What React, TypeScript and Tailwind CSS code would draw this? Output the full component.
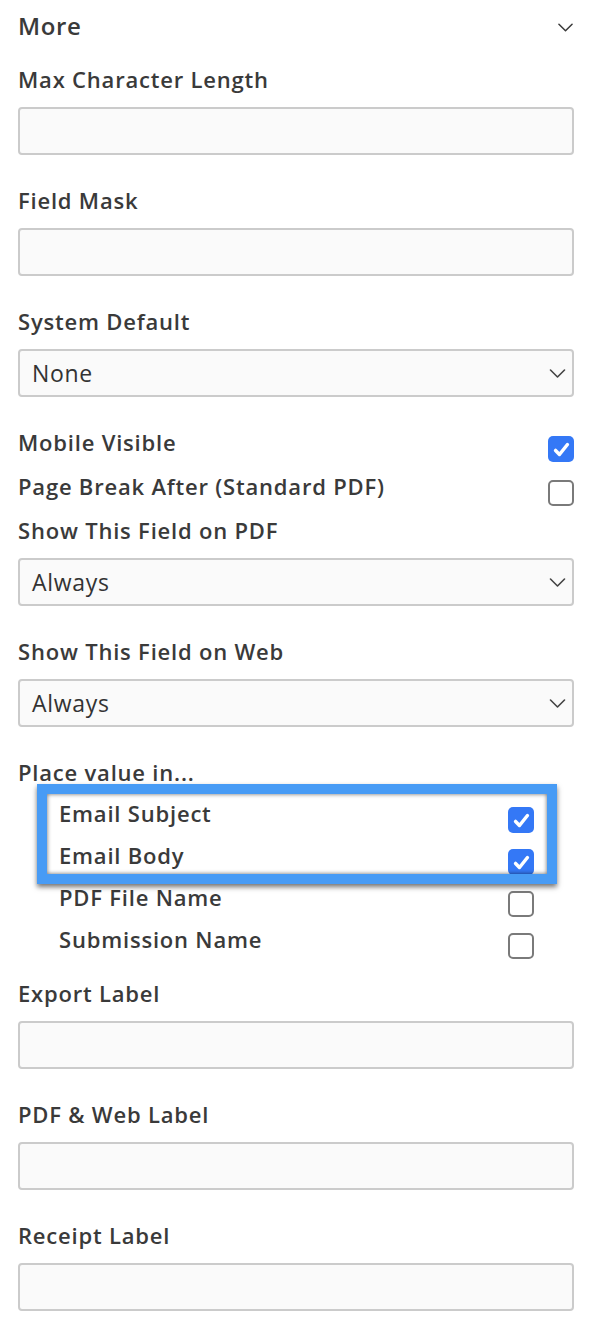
import React from "react";

const font = { fontFamily: "'Open Sans', Lato, Arial, sans-serif" };

function Chevron({ className }: { className?: string }) {
  return (
    <svg viewBox="0 0 16 9" className={className} fill="none">
      <path d="M1 1l7 7 7-7" stroke="currentColor" strokeWidth="1.6" strokeLinecap="round" strokeLinejoin="round" />
    </svg>
  );
}

function Checkbox({ checked }: { checked?: boolean }) {
  if (checked) {
    return (
      <span className="flex h-[26px] w-[26px] shrink-0 items-center justify-center rounded-[5px] bg-[#3478f6]">
        <svg viewBox="0 0 16 16" className="h-[19px] w-[19px]" fill="none">
          <path d="M3 8.8l3.3 3.4L13 3.8" stroke="#fff" strokeWidth="2.9" strokeLinecap="round" strokeLinejoin="round" />
        </svg>
      </span>
    );
  }
  return <span className="block h-[26px] w-[26px] shrink-0 rounded-[5px] border-2 border-[#7a7a7a] bg-white" />;
}

function Label({ children }: { children: React.ReactNode }) {
  return (
    <div className="h-[28px] text-[22px] font-[650] leading-[26px] tracking-[0.8px] text-[#3a3a3a]">
      {children}
    </div>
  );
}

function TextField({ label }: { label: string }) {
  return (
    <div className="mt-[32px]">
      <Label>{label}</Label>
      <div className="mt-[13px] h-[48px] rounded-[4px] border-2 border-[#cbcbcb] bg-[#fafafa]" />
    </div>
  );
}

function SelectField({ label, value }: { label: string; value: string }) {
  return (
    <div className="mt-[32px]">
      <Label>{label}</Label>
      <div className="mt-[13px] flex h-[48px] items-center justify-between rounded-[4px] border-2 border-[#cbcbcb] bg-[#fafafa] pl-[12px] pr-[6px]">
        <span className="text-[23px] tracking-[0.7px] text-[#333]">{value}</span>
        <Chevron className="h-[9px] w-[17px] text-[#444]" />
      </div>
    </div>
  );
}

function CheckRow({ label, checked, height }: { label: string; checked?: boolean; height: string }) {
  return (
    <div className={`flex items-start justify-between ${height}`}>
      <Label>{label}</Label>
      <div className="mt-[7px]">
        <Checkbox checked={checked} />
      </div>
    </div>
  );
}

export default function App() {
  const places = [
    { label: "Email Subject", checked: true },
    { label: "Email Body", checked: true },
    { label: "PDF File Name", checked: false },
    { label: "Submission Name", checked: false },
  ];

  return (
    <div className="min-h-screen bg-white pl-[18px] pr-[22px]" style={font}>
      <div className="flex h-[54px] items-center justify-between">
        <span className="-mt-[2px] text-[24px] font-[650] tracking-[0.6px] text-[#3a3a3a]">More</span>
        <Chevron className="mr-[1px] h-[9px] w-[15px] text-[#3a3a3a]" />
      </div>

      <div className="-mt-[20px]">
        <TextField label="Max Character Length" />
      </div>
      <TextField label="Field Mask" />
      <SelectField label="System Default" value="None" />

      <div className="mt-[32px]">
        <CheckRow label="Mobile Visible" checked height="h-[44px]" />
        <CheckRow label="Page Break After (Standard PDF)" height="h-[44px]" />
      </div>

      <div className="-mt-[32px]">
        <SelectField label="Show This Field on PDF" value="Always" />
      </div>
      <SelectField label="Show This Field on Web" value="Always" />

      <div className="mt-[32px]">
        <Label>Place value in...</Label>
        <div className="relative mt-[13px] pl-[41px] pr-[40px]">
          {places.map((p) => (
            <CheckRow key={p.label} label={p.label} checked={p.checked} height="h-[42px]" />
          ))}
          <div className="pointer-events-none absolute left-[19px] top-[-16px] h-[100px] w-[520px] border-[10px] border-[#479bf5] shadow-[0_3px_5px_rgba(0,0,0,0.55),inset_0_0_4px_rgba(0,0,0,0.6)]" />
        </div>
      </div>

      <div className="-mt-[20px]">
        <TextField label="Export Label" />
      </div>
      <TextField label="PDF & Web Label" />
      <TextField label="Receipt Label" />
    </div>
  );
}
